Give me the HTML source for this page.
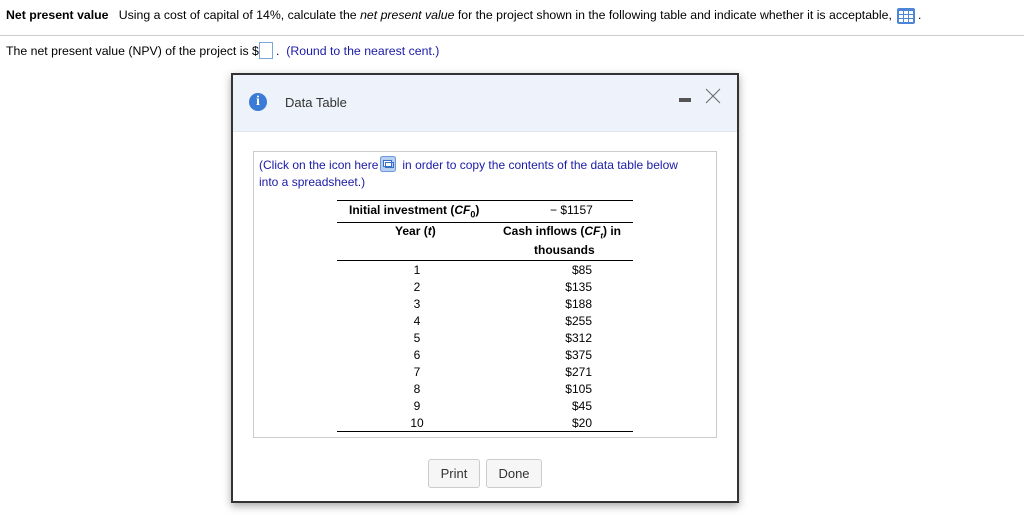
<!DOCTYPE html>
<html><head><style>
body{margin:0;width:1024px;height:519px;background:#fff;font-family:"Liberation Sans",Arial,sans-serif;font-size:12px;color:#000;position:relative;overflow:hidden}
.a{position:absolute;white-space:nowrap}
.blue{color:#1a1aa8}
td{padding:0;height:17px;font-size:12px}
</style></head><body>
<div class="a" style="left:6px;top:8px;font-size:12.3px"><b>Net present value</b>&nbsp;&nbsp;&nbsp;Using a cost of capital of 14%, calculate the <i>net present value</i> for the project shown in the following table and indicate whether it is acceptable,</div>
<svg class="a" style="left:897px;top:8px" width="18" height="16" viewBox="0 0 18 16"><rect x="0" y="0" width="18" height="16" rx="2" fill="#4d86d9"/><g fill="#fff"><rect x="2" y="3" width="4" height="3"/><rect x="7" y="3" width="4" height="3"/><rect x="12" y="3" width="4" height="3"/><rect x="2" y="7" width="4" height="3"/><rect x="7" y="7" width="4" height="3"/><rect x="12" y="7" width="4" height="3"/><rect x="2" y="11" width="4" height="3"/><rect x="7" y="11" width="4" height="3"/><rect x="12" y="11" width="4" height="3"/></g></svg>
<div class="a" style="left:918px;top:8px">.</div>
<div class="a" style="left:0;top:35px;width:1024px;height:1px;background:#ccc"></div>
<div class="a" style="left:6px;top:44px;font-size:12.3px">The net present value (NPV) of the project is $</div>
<div class="a" style="left:259px;top:42px;width:14px;height:17px;border:1px solid #7aa7d6;box-sizing:border-box"></div>
<div class="a" style="left:276px;top:44px;font-size:12.3px">. <span class="blue">&nbsp;(Round to the nearest cent.)</span></div>

<div class="a" style="left:231px;top:73px;width:508px;height:430px;border:2px solid #333;box-sizing:border-box;background:#fff;box-shadow:0 3px 8px rgba(0,0,0,.35)">
 <div class="a" style="left:0;top:0;width:504px;height:56px;background:#edf2fb;border-bottom:1px solid #dde6f3"></div>
 <div class="a" style="left:16px;top:18px;width:18px;height:18px;border-radius:50%;background:#3a7bd5;color:#fff;font-weight:bold;font-family:'Liberation Serif',serif;font-size:14px;text-align:center;line-height:18px">i</div>
 <div class="a" style="left:52px;top:20px;font-size:13px;color:#333">Data Table</div>
 <div class="a" style="left:446px;top:23px;width:12px;height:4px;background:#555"></div>
 <svg class="a" style="left:472px;top:13px" width="16" height="16"><path d="M1 1L15 15M15 1L1 15" stroke="#666" stroke-width="1"/></svg>
 <div class="a" style="left:20px;top:76px;width:464px;height:287px;border:1px solid #ccc;box-sizing:border-box"></div>
 <div class="a blue" style="left:26px;top:81px;line-height:17px">(Click on the icon here<svg style="vertical-align:-3px;margin:0 6px 0 2px" width="16" height="16"><rect x="0.5" y="0.5" width="15" height="15" rx="2" fill="#b7cff0" stroke="#6d9be0"/><rect x="3.5" y="4.5" width="8" height="6" fill="#fff" stroke="#3a6fc4"/><rect x="5.5" y="6.5" width="8" height="5" fill="none" stroke="#3a6fc4"/></svg>in order to copy the contents of the data table below<br>into a spreadsheet.)</div>
 <div class="a" style="left:104px;top:125px;width:296px">
  <div style="border-top:1px solid #000;height:21px;line-height:18px;font-weight:bold;position:relative"><span style="position:absolute;left:12px;top:0px">Initial investment (<i>CF</i><sub style="font-size:9px">0</sub>)</span><span style="position:absolute;left:213px;top:0px;font-weight:normal">− $1157</span></div>
  <div style="border-top:1px solid #000;height:38px;position:relative;font-weight:bold"><span style="position:absolute;left:58px;top:1px">Year (<i>t</i>)</span><span style="position:absolute;left:166px;top:1px">Cash inflows (<i>CF<sub style="font-size:8px">t</sub></i>) in</span><span style="position:absolute;left:197px;top:20px">thousands</span></div>
  <table style="border-top:1px solid #000;border-bottom:1px solid #000;width:296px;border-collapse:collapse;margin-top:-1px">
   <tr><td style="width:160px;text-align:center">1</td><td style="text-align:right;padding-right:41px">$85</td></tr>
   <tr><td style="text-align:center">2</td><td style="text-align:right;padding-right:41px">$135</td></tr>
   <tr><td style="text-align:center">3</td><td style="text-align:right;padding-right:41px">$188</td></tr>
   <tr><td style="text-align:center">4</td><td style="text-align:right;padding-right:41px">$255</td></tr>
   <tr><td style="text-align:center">5</td><td style="text-align:right;padding-right:41px">$312</td></tr>
   <tr><td style="text-align:center">6</td><td style="text-align:right;padding-right:41px">$375</td></tr>
   <tr><td style="text-align:center">7</td><td style="text-align:right;padding-right:41px">$271</td></tr>
   <tr><td style="text-align:center">8</td><td style="text-align:right;padding-right:41px">$105</td></tr>
   <tr><td style="text-align:center">9</td><td style="text-align:right;padding-right:41px">$45</td></tr>
   <tr><td style="text-align:center">10</td><td style="text-align:right;padding-right:41px">$20</td></tr>
  </table>
 </div>
 <div class="a" style="left:195px;top:384px;width:52px;height:29px;border:1px solid #ccc;border-radius:3px;background:#f6f6f6;box-sizing:border-box;text-align:center;line-height:27px;color:#333;font-size:13px">Print</div>
 <div class="a" style="left:253px;top:384px;width:56px;height:29px;border:1px solid #ccc;border-radius:3px;background:#f6f6f6;box-sizing:border-box;text-align:center;line-height:27px;color:#333;font-size:13px">Done</div>
</div>
</body></html>
